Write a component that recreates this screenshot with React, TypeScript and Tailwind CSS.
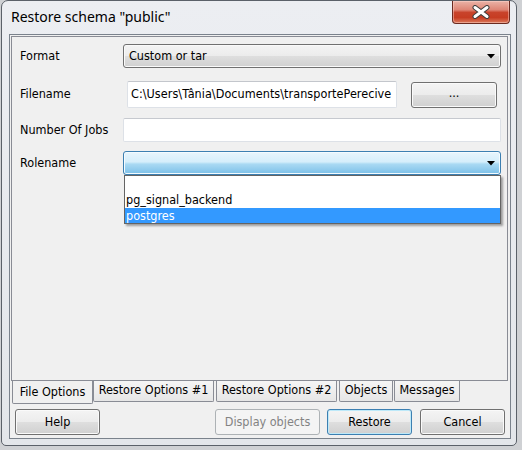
import React from "react";

const btnBg =
  "bg-[linear-gradient(to_bottom,#f4f4f4_0%,#ececec_48%,#dedede_52%,#d0d0d0_100%)]";

function Arrow() {
  return (
    <svg width="8" height="5" viewBox="0 0 8 5" className="block">
      <polygon points="0,0 8,0 4,4.5" fill="#000" />
    </svg>
  );
}

function Tab({ label, w, active }: { label: string; w: string; active?: boolean }) {
  if (active) {
    return (
      <div
        className={`${w} h-[24px] -mt-px bg-[#f0f0f0] border-x border-b border-[#898c95] rounded-b-[2px] flex items-center justify-center pt-[1px]`}
      >
        {label}
      </div>
    );
  }
  return (
    <div
      className={`${w} h-[22px] -mt-px border-x border-b border-[#898c95] rounded-b-[2px] bg-[linear-gradient(to_bottom,#f6f6f6,#e6e6e6)] flex items-center justify-center`}
    >
      {label}
    </div>
  );
}

export default function App() {
  return (
    <div className="w-[522px] h-[450px] bg-[#cfd1d4] overflow-hidden font-['DejaVu_Sans_Condensed','DejaVu_Sans',sans-serif] text-[12.5px] text-black">
      <div className="ml-px w-[516px] h-[446px] rounded-t-[7px] rounded-b-[5px] border border-[#5b6169] bg-[linear-gradient(to_bottom,#eceef2,#e3e6ea)] flex flex-col">
        {/* title bar */}
        <div className="h-[33px] flex items-start">
          <div className="flex-1 pl-[9px] pt-[6px] text-[14px] font-['Noto_Sans',sans-serif] leading-[20px] text-black">
            Restore schema "public"
          </div>
          <div className="mr-[6px] w-[58px] h-[23px] rounded-b-[4px] border border-t-0 border-[#6b2a20] bg-[linear-gradient(to_bottom,#eab3a7_0%,#de8575_40%,#c8432b_52%,#c63c22_75%,#dc7a5c_100%)] shadow-[inset_0_0_0_1px_rgba(255,220,210,0.45)] flex items-center justify-center">
            <svg width="20" height="14" viewBox="0 0 20 14">
              <path d="M4 2.5 L16 11.5 M16 2.5 L4 11.5" stroke="#3d3d3d" strokeWidth="5" strokeLinecap="round" />
              <path d="M4 2.5 L16 11.5 M16 2.5 L4 11.5" stroke="#ffffff" strokeWidth="3" strokeLinecap="round" />
            </svg>
          </div>
        </div>
        {/* client area */}
        <div className="ml-[7px] w-[502px] h-[405px] border border-[#7a828c] bg-[#f0f0f0] flex flex-col">
          {/* panel */}
          <div className="mt-px ml-px w-[497px] h-[345px] border border-[#898c95] bg-[#f0f0f0] relative">
            <div className="pl-[8px] pt-[7px] flex flex-col">
              {/* Format */}
              <div className="flex items-center h-[24px]">
                <div className="w-[103px]">Format</div>
                <div className={`w-[378px] h-[24px] border border-[#707070] rounded-[3px] ${btnBg} shadow-[inset_0_0_0_1px_#fafafa] flex items-center pl-[5px] pr-[5px]`}>
                  <span className="flex-1">Custom or tar</span>
                  <Arrow />
                </div>
              </div>
              {/* Filename */}
              <div className="flex items-center h-[27px] mt-[13px]">
                <div className="w-[107px]">Filename</div>
                <div className="w-[270px] h-[27px] bg-white border border-[#dde1e7] border-t-[#c3c6cc] rounded-[2px] flex items-center pl-[3px] overflow-hidden whitespace-nowrap tracking-[0.05px]">
                  C:\Users\Tânia\Documents\transportePerecive
                </div>
                <div className={`ml-[14px] w-[86px] h-[26px] border border-[#707070] rounded-[3px] ${btnBg} shadow-[inset_0_0_0_1px_#fafafa] flex items-center justify-center pb-[2px]`}>
                  ...
                </div>
              </div>
              {/* Number of jobs */}
              <div className="flex items-center h-[24px] mt-[10px]">
                <div className="w-[103px]">Number Of Jobs</div>
                <div className="w-[378px] h-[24px] bg-white border border-[#dde1e7] border-t-[#c6c9cf] rounded-[2px]" />
              </div>
              {/* Rolename */}
              <div className="flex items-center h-[24px] mt-[9px]">
                <div className="w-[103px]">Rolename</div>
                <div className="relative w-[378px] h-[24px]">
                  <div className="w-[378px] h-[24px] border border-[#3c7fb1] rounded-[3px] bg-[linear-gradient(to_bottom,#e8f5fc_0%,#d5eefb_45%,#a9d9f3_55%,#7cc0e8_100%)] shadow-[inset_0_0_0_1px_#f4fbff] flex items-center justify-end pr-[5px]">
                    <Arrow />
                  </div>
                  <div className="absolute left-px top-[24px] w-[377px] h-[49px] bg-white border border-[#646464] shadow-[2px_2px_2px_rgba(0,0,0,0.35)] flex flex-col z-10">
                    <div className="h-[16px]" />
                    <div className="h-[16px] leading-[16px] pl-[1px]">pg_signal_backend</div>
                    <div className="h-[15px] leading-[15px] pl-[1px] bg-[#3399ff] text-white">postgres</div>
                  </div>
                </div>
              </div>
            </div>
          </div>
          {/* tabs */}
          <div className="h-[23px] flex items-start pl-[2px]">
            <Tab label="File Options" w="w-[81px]" active />
            <Tab label="Restore Options #1" w="w-[121px]" />
            <div className="w-[2px]" />
            <Tab label="Restore Options #2" w="w-[121px]" />
            <div className="w-[2px]" />
            <Tab label="Objects" w="w-[54px]" />
            <div className="w-[1px]" />
            <Tab label="Messages" w="w-[66px]" />
          </div>
          {/* buttons */}
          <div className="mt-[5px] h-[26px] flex items-center pl-[5px]">
            <div className={`w-[85px] h-[26px] border border-[#707070] rounded-[3px] ${btnBg} shadow-[inset_0_0_0_1px_#fafafa] flex items-center justify-center`}>
              Help
            </div>
            <div className="ml-[115px] w-[105px] h-[26px] border border-[#adb2b5] rounded-[3px] bg-[#f4f4f4] text-[#838383] flex items-center justify-center">
              Display objects
            </div>
            <div className={`ml-[7px] w-[85px] h-[26px] border border-[#3c7fb1] rounded-[3px] ${btnBg} shadow-[inset_0_0_0_1px_#bde9f9] flex items-center justify-center`}>
              Restore
            </div>
            <div className={`ml-[8px] w-[85px] h-[26px] border border-[#707070] rounded-[3px] ${btnBg} shadow-[inset_0_0_0_1px_#fafafa] flex items-center justify-center`}>
              Cancel
            </div>
          </div>
        </div>
      </div>
    </div>
  );
}
